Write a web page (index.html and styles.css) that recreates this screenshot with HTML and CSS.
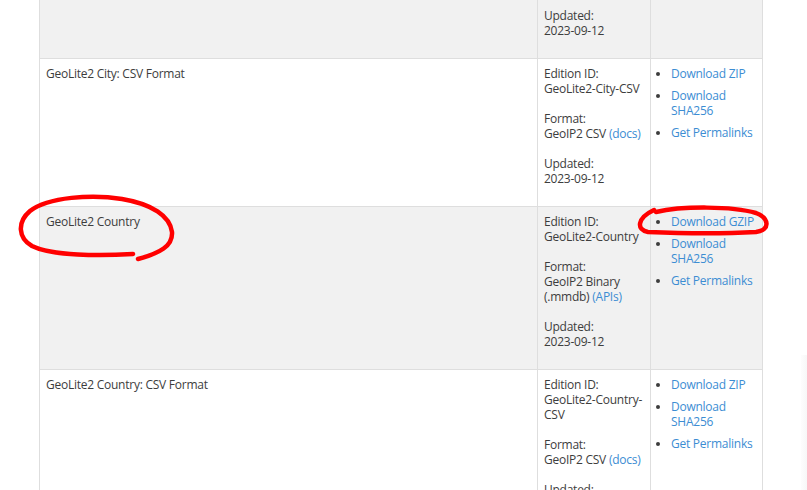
FILE: index.html
```html
<!DOCTYPE html>
<html>
<head>
<meta charset="utf-8">
<link rel="stylesheet" href="styles.css">
</head>
<body>
<div class="page">
  <table class="dl-table">
    <tbody>
      <tr class="alt">
        <td class="name">GeoLite2 City</td>
        <td class="info">
          <p><strong>Edition ID:</strong><br>GeoLite2-City</p>
          <p><strong>Format:</strong><br>GeoIP2 Binary (.mmdb) <a href="#">(APIs)</a></p>
          <p><strong>Updated:</strong><br>2023-09-12</p>
        </td>
        <td class="links">
          <ul>
            <li><a href="#">Download GZIP</a></li>
            <li><a href="#">Download SHA256</a></li>
            <li><a href="#">Get Permalinks</a></li>
          </ul>
        </td>
      </tr>
      <tr>
        <td class="name">GeoLite2 City: CSV Format</td>
        <td class="info">
          <p><strong>Edition ID:</strong><br>GeoLite2-City-CSV</p>
          <p><strong>Format:</strong><br>GeoIP2&nbsp;CSV&nbsp;<a href="#">(docs)</a></p>
          <p><strong>Updated:</strong><br>2023-09-12</p>
        </td>
        <td class="links">
          <ul>
            <li><a href="#">Download ZIP</a></li>
            <li><a href="#">Download SHA256</a></li>
            <li><a href="#">Get Permalinks</a></li>
          </ul>
        </td>
      </tr>
      <tr class="alt">
        <td class="name">GeoLite2 Country</td>
        <td class="info">
          <p><strong>Edition ID:</strong><br>GeoLite2-Country</p>
          <p><strong>Format:</strong><br>GeoIP2 Binary (.mmdb) <a href="#">(APIs)</a></p>
          <p><strong>Updated:</strong><br>2023-09-12</p>
        </td>
        <td class="links">
          <ul>
            <li><a href="#">Download&nbsp;GZIP</a></li>
            <li><a href="#">Download SHA256</a></li>
            <li><a href="#">Get Permalinks</a></li>
          </ul>
        </td>
      </tr>
      <tr>
        <td class="name">GeoLite2 Country: CSV Format</td>
        <td class="info">
          <p><strong>Edition ID:</strong><br>GeoLite2-Country-CSV</p>
          <p><strong>Format:</strong><br>GeoIP2&nbsp;CSV&nbsp;<a href="#">(docs)</a></p>
          <p><strong>Updated:</strong><br>2023-09-12</p>
        </td>
        <td class="links">
          <ul>
            <li><a href="#">Download ZIP</a></li>
            <li><a href="#">Download SHA256</a></li>
            <li><a href="#">Get Permalinks</a></li>
          </ul>
        </td>
      </tr>
    </tbody>
  </table>
</div>
<div class="edge-fade"></div>
<svg class="marks" width="807" height="490" viewBox="0 0 807 490">
  <path d="M133,254 C100,256 52,256 32,246 C18,238 17,222 30,211 C48,197 92,194 122,199 C152,204 170,216 172,232 C173,246 160,253 138,259" />
  <path d="M656,212 C682,206 732,206 756,213 C769,218 771,230 756,232 C720,234 672,233 648,232 C636,230 637,218 654,210" />
</svg>
</body>
</html>
```
FILE: styles.css
```css
html, body {
  margin: 0;
  padding: 0;
  background: #ffffff;
}
body {
  width: 807px;
  height: 490px;
  overflow: hidden;
  position: relative;
  font-family: "Open Sans", "Noto Sans", sans-serif;
  font-size: 12px;
  line-height: 15px;
  letter-spacing: -0.25px;
  color: #3d3d3d;
}
.page {
  display: flex;
  padding-left: 39px;
  margin-top: -105px;
}
.dl-table {
  width: 724px;
  table-layout: fixed;
  border-collapse: collapse;
  border: 1px solid #dedede;
}
.dl-table td {
  border: 1px solid #dedede;
  vertical-align: top;
  padding: 7px 6px 5px 6px;
}
.dl-table tr.alt td {
  background: #f1f1f1;
}
.dl-table td.name {
  width: 485px;
}
.dl-table td.info {
  width: 100px;
  white-space: normal;
}
.dl-table td.links {
  width: 103px;
  padding-right: 2px;
}
.info p {
  margin: 0 0 15px 0;
}
.info strong {
  font-weight: normal;
  color: #3d3d3d;
}
a {
  color: #3c8dd3;
  text-decoration: none;
}
.links ul {
  margin: 0;
  padding: 0 0 0 14px;
  list-style: disc;
}
.links li {
  margin-bottom: 7px;
  color: #3d3d3d;
}
.edge-fade {
  position: absolute;
  right: 0;
  top: 355px;
  width: 6px;
  height: 135px;
  background: linear-gradient(to right, #fdfdfd, #f7f7f7);
}
.marks {
  position: absolute;
  top: 0;
  left: 0;
  pointer-events: none;
}
.marks path {
  fill: none;
  stroke: #ff0000;
  stroke-width: 4.5;
  stroke-linecap: round;
  stroke-linejoin: round;
}
```
